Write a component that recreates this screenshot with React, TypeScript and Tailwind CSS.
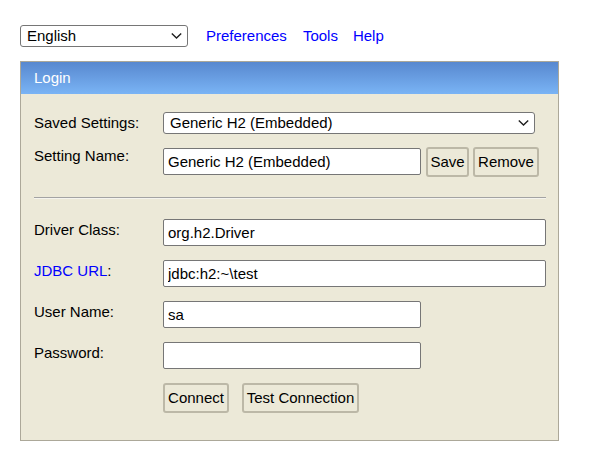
import React from "react";

function Chevron() {
  return (
    <svg width="11" height="7" viewBox="0 0 11 7" className="pointer-events-none absolute top-1/2 -translate-y-1/2 right-[6px]">
      <polyline points="0.8,1 5.5,5.6 10.2,1" fill="none" stroke="#1f1f1f" strokeWidth="1.4" />
    </svg>
  );
}

function Select({ value, className }: { value: string; className: string }) {
  return (
    <div className={"relative " + className}>
      <select
        defaultValue={value}
        className="appearance-none w-full h-full bg-white border border-[#767676] rounded-[3px] pl-[6px] pr-[20px] pb-[1px] text-[15px] leading-[17px] text-black outline-none"
      >
        <option>{value}</option>
      </select>
      <Chevron />
    </div>
  );
}

function Input({ value, className }: { value: string; className: string }) {
  return (
    <input
      defaultValue={value}
      className={
        "h-[27px] bg-white border border-[#767676] rounded-[2px] pl-[4px] pb-[1px] text-[15px] leading-[17px] text-black outline-none " +
        className
      }
    />
  );
}

function Btn({ label, className }: { label: string; className: string }) {
  return (
    <button
      className={
        "h-[30px] bg-[#ece9d8] border-2 border-[#bcb8a7] rounded-[3px] text-[15px] leading-[17px] text-black flex items-center justify-center pb-[1px] " +
        className
      }
    >
      {label}
    </button>
  );
}

export default function App() {
  return (
    <div className="w-[600px] h-[457px] bg-white pt-[25px] pl-[20px] font-['Liberation_Sans',Arial,sans-serif] text-[15px] leading-[17px] text-black">
      <div className="flex items-center h-[22px]">
        <Select value="English" className="w-[168px] h-[22px]" />
        <a className="ml-[18px] mb-[1px] text-[#0000ff]">Preferences</a>
        <a className="ml-[16px] mb-[1px] text-[#0000ff]">Tools</a>
        <a className="ml-[15px] mb-[1px] text-[#0000ff]">Help</a>
      </div>

      <div className="mt-[14px] w-[539px] border border-[#aca899] bg-[#ece9d8]">
        <div className="h-[32px] bg-linear-to-b from-[#5888cf] to-[#7ab4f5] flex items-center pl-[13px] pb-[1px] text-white">
          Login
        </div>
        <div className="pl-[13px] pb-[27px]">
          <div className="mt-[18px] flex items-center h-[22px]">
            <div className="w-[129px] pb-[1px]">Saved Settings:</div>
            <Select value="Generic H2 (Embedded)" className="w-[372px] h-[22px]" />
          </div>

          <div className="mt-[13px] flex items-start h-[30px]">
            <div className="w-[129px]">Setting Name:</div>
            <Input value="Generic H2 (Embedded)" className="w-[258px] mt-[1px]" />
            <Btn label="Save" className="ml-[5px] w-[43px]" />
            <Btn label="Remove" className="ml-[4px] w-[66px]" />
          </div>

          <div className="mt-[20px] w-[512px] h-[2px] border-t border-t-[#a3a3a3] border-b border-b-[#f5f4ee]" />

          <div className="mt-[20px] flex items-start h-[27px]">
            <div className="w-[129px] pt-[2px]">Driver Class:</div>
            <Input value="org.h2.Driver" className="w-[383px]" />
          </div>

          <div className="mt-[14px] flex items-start h-[27px]">
            <div className="w-[129px] pt-[2px]">
              <a className="text-[#0000ff]">JDBC URL</a>:
            </div>
            <Input value="jdbc:h2:~\test" className="w-[383px]" />
          </div>

          <div className="mt-[14px] flex items-start h-[27px]">
            <div className="w-[129px] pt-[2px]">User Name:</div>
            <Input value="sa" className="w-[258px]" />
          </div>

          <div className="mt-[14px] flex items-start h-[27px]">
            <div className="w-[129px] pt-[2px]">Password:</div>
            <input type="password" className="h-[27px] w-[258px] bg-white border border-[#767676] rounded-[2px] pl-[4px] outline-none" />
          </div>

          <div className="mt-[14px] flex h-[30px] pl-[129px]">
            <Btn label="Connect" className="w-[66px]" />
            <Btn label="Test Connection" className="ml-[13px] w-[117px]" />
          </div>
        </div>
      </div>
    </div>
  );
}
